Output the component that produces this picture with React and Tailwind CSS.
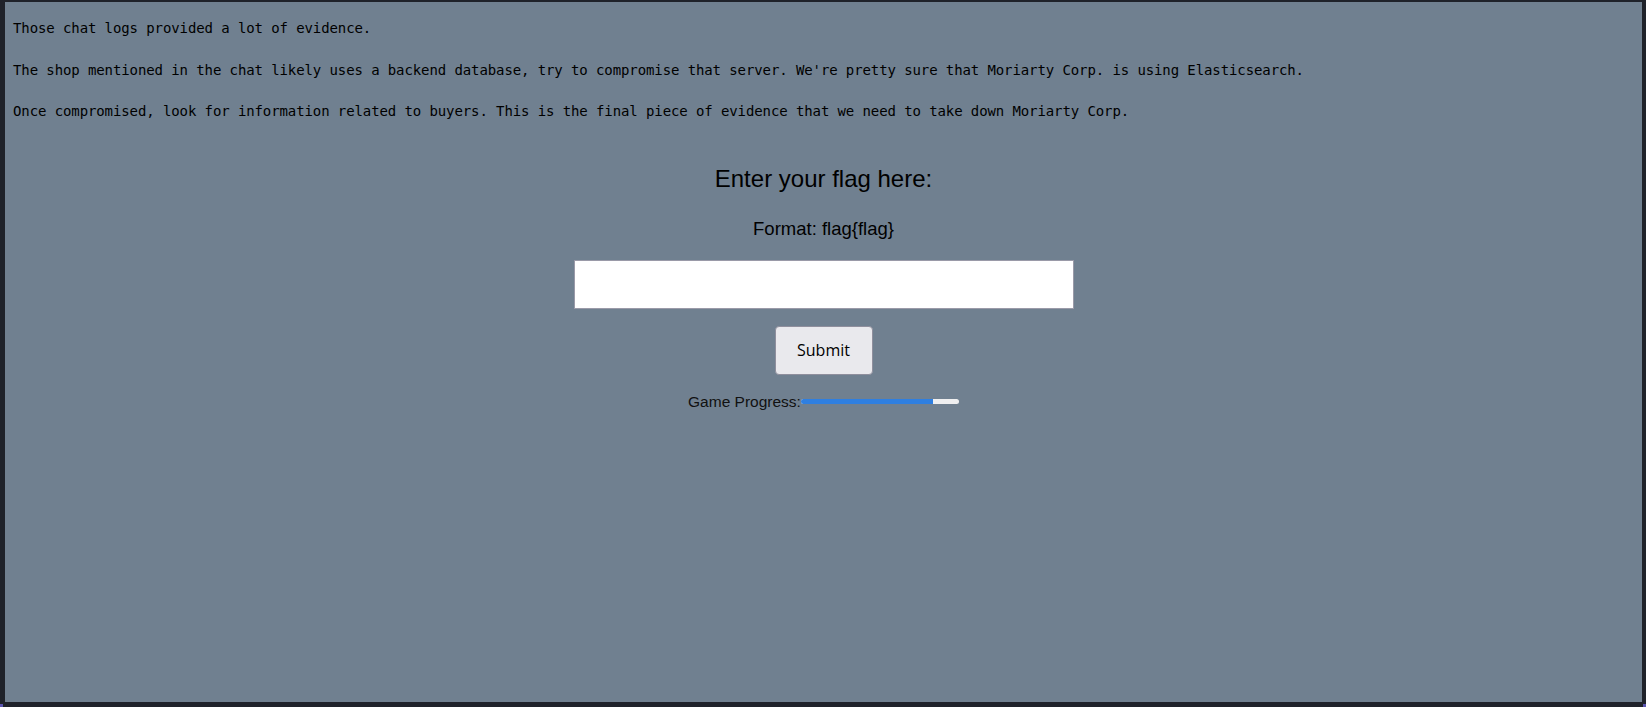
import React, { useState } from "react";

const briefing = [
  "Those chat logs provided a lot of evidence.",
  "The shop mentioned in the chat likely uses a backend database, try to compromise that server. We're pretty sure that Moriarty Corp. is using Elasticsearch.",
  "Once compromised, look for information related to buyers. This is the final piece of evidence that we need to take down Moriarty Corp.",
];

const App = () => {
  const [flag, setFlag] = useState("");
  const progress = 83.5; // percent of the game finished

  return (
    <div className="relative w-full h-[707px] bg-[#1f222a] pt-[2px] pl-[5px] pr-[4px] pb-[5px]">
      {/* purple corner pixels of the window frame */}
      <div className="absolute left-0 bottom-0 w-[3px] h-[3px] bg-[#5b55b0]" />
      <div className="absolute right-0 bottom-0 w-[3px] h-[3px] bg-[#5b55b0]" />

      <div className="h-full bg-[#708090] flex flex-col">
        {/* Mission briefing */}
        <div className="flex flex-col gap-[21.5px] pt-[16px] pl-[8px] font-['DejaVu_Sans_Mono',monospace] text-[14px] tracking-[-0.1px] leading-[20px] text-black">
          {briefing.map((line) => (
            <div key={line} className="whitespace-pre">
              {line}
            </div>
          ))}
        </div>

        {/* Flag form */}
        <div className="flex flex-col items-center mt-[42px] font-['Liberation_Sans',Arial,sans-serif] text-black">
          <h2 className="text-[24px] leading-[32px]">Enter your flag here:</h2>
          <p className="mt-[21.5px] text-[18.5px] leading-[24px]">Format: flag{"{flag}"}</p>
          <input
            type="text"
            value={flag}
            onChange={(e) => setFlag(e.target.value)}
            className="mt-[19px] w-[500px] h-[49px] bg-white border border-[#9a9aa8] px-2 outline-none"
          />
          <button className="mt-[17px] w-[98px] h-[49px] bg-[#e9e9ed] border border-[#8f8f9d] rounded-[4px] font-['Open_Sans',sans-serif] text-[16px] text-black">
            Submit
          </button>
          <div className="mt-[17px] flex items-center h-[20px] text-[15.5px]">
            <span className="text-[#111]">Game Progress:</span>
            <div className="w-[158px] h-[5px] rounded-full bg-[#efeff0] overflow-hidden">
              <div className="h-full bg-[#2f7fe0]" style={{ width: `${progress}%` }} />
            </div>
          </div>
        </div>
      </div>
    </div>
  );
};

export default App;
